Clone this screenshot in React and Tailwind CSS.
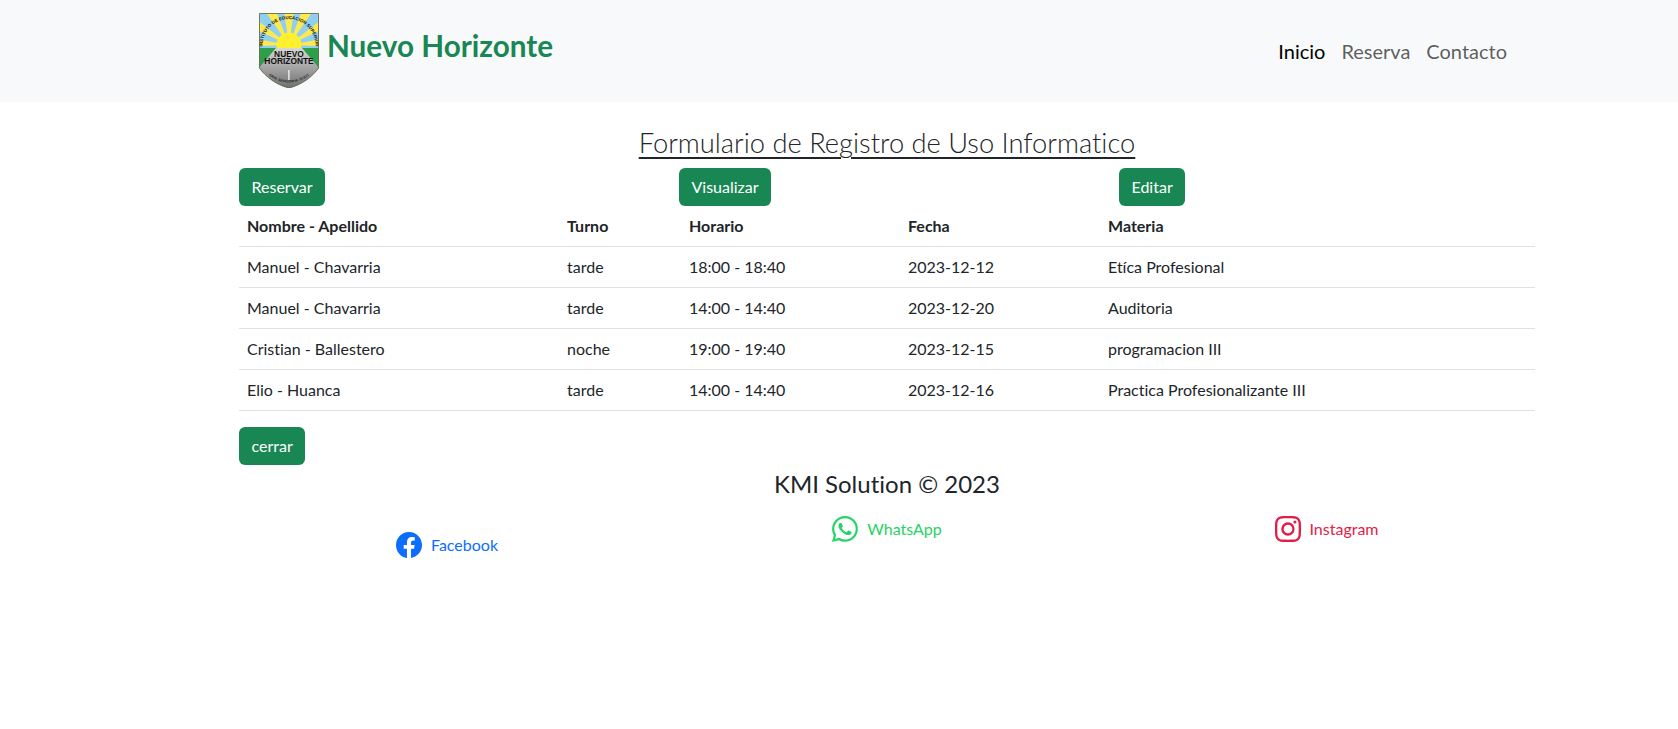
import React from 'react';
import { BsFacebook, BsWhatsapp, BsInstagram } from 'react-icons/bs';

const rows = [
  { nombre: 'Manuel - Chavarria', turno: 'tarde', horario: '18:00 - 18:40', fecha: '2023-12-12', materia: 'Etíca Profesional' },
  { nombre: 'Manuel - Chavarria', turno: 'tarde', horario: '14:00 - 14:40', fecha: '2023-12-20', materia: 'Auditoria' },
  { nombre: 'Cristian - Ballestero', turno: 'noche', horario: '19:00 - 19:40', fecha: '2023-12-15', materia: 'programacion III' },
  { nombre: 'Elio - Huanca', turno: 'tarde', horario: '14:00 - 14:40', fecha: '2023-12-16', materia: 'Practica Profesionalizante III' },
];

const rays = [
  'M30 32 L-2 26 L-2 33 Z',
  'M30 32 L-2 7 L-2 17 Z',
  'M30 32 L6 -2 L17 -2 Z',
  'M30 32 L25 -2 L35 -2 Z',
  'M30 32 L43 -2 L54 -2 Z',
  'M30 32 L62 7 L62 17 Z',
  'M30 32 L62 26 L62 33 Z',
];

const shieldPath = 'M0.5 0.5 H59.5 V55 C59.5 55 50 70 30 75 C10 70 0.5 55 0.5 55 Z';

// escudo del instituto, dibujado a mano
const Logo = () => (
  <svg viewBox="0 0 60 75" className="w-[60px] h-[75px] shrink-0">
    <defs>
      <clipPath id="shield">
        <path d={shieldPath} />
      </clipPath>
      <linearGradient id="road" x1="0" y1="0" x2="0" y2="1">
        <stop offset="0" stopColor="#d8d8d8" />
        <stop offset="1" stopColor="#6f6f6f" />
      </linearGradient>
      <path id="arcTop" d="M3.5 33 A26.5 27 0 0 1 56.5 33" />
      <path id="arcBottom" d="M9 62 Q30 77 51 62" />
    </defs>
    <g clipPath="url(#shield)">
      <rect width="60" height="36" fill="#8fd0f0" />
      {rays.map((d, i) => (
        <path key={i} d={d} fill="#ffe94d" />
      ))}
      <circle cx="30" cy="32" r="12.5" fill="#fff02e" />
      <rect y="35" width="60" height="24" fill="#2f9e4a" />
      <path d="M17 35 H43 L60 55 V75 H0 V55 Z" fill="url(#road)" />
      <rect x="29.3" y="57" width="1.2" height="10" fill="#fff" />
    </g>
    <text fontSize="4.5" fontWeight="700" fill="#111" fontFamily="'Liberation Sans', sans-serif">
      <textPath href="#arcTop" startOffset="50%" textAnchor="middle">INSTITUTO DE EDUCACION SUPERIOR</textPath>
    </text>
    <text x="30" y="43.5" textAnchor="middle" fontSize="8.4" fontWeight="700" fill="#111" fontFamily="'Liberation Sans', sans-serif">NUEVO</text>
    <text x="30" y="51" textAnchor="middle" fontSize="8.4" fontWeight="700" fill="#111" fontFamily="'Liberation Sans', sans-serif">HORIZONTE</text>
    <text fontSize="3.4" fontWeight="700" fill="#222" fontFamily="'Liberation Sans', sans-serif">
      <textPath href="#arcBottom" startOffset="50%" textAnchor="middle">GRAL SAVADOR M. JUJUY</textPath>
    </text>
    <path d={shieldPath} fill="none" stroke="#5c5c3c" strokeWidth="0.8" />
  </svg>
);

const Btn = ({ children }) => (
  <button className="h-[38px] px-[12.5px] rounded-md bg-[#198754] text-white text-[16px]">{children}</button>
);

export default function App() {
  return (
    <div className="min-h-[729px] bg-white text-[#212529] font-['Lato',sans-serif] [font-variant-ligatures:none]">
      <header className="h-[102px] bg-[#f8f9fa] pl-[259px] pr-[171px] flex justify-between">
        <div className="flex items-start pt-[13px]">
          <Logo />
          <span className="ml-[8px] mt-[15px] text-[29.7px] leading-[36px] font-bold text-[#198754]">Nuevo Horizonte</span>
        </div>
        <nav className="flex gap-4 pt-[36px] text-[20px] leading-[30px] text-black/65">
          <a className="text-black">Inicio</a>
          <a>Reserva</a>
          <a>Contacto</a>
        </nav>
      </header>

      <main className="ml-[239px] w-[1296px]">
        <h1 className="pt-[23px] h-[66px] text-center text-[27.3px] leading-[36px] font-light underline decoration-2 underline-offset-4">
          Formulario de Registro de Uso Informatico
        </h1>
        <div className="grid grid-cols-[440px_440px_1fr] items-start">
          <div><Btn>Reservar</Btn></div>
          <div><Btn>Visualizar</Btn></div>
          <div><Btn>Editar</Btn></div>
        </div>
        <table className="w-full table-fixed text-[16px] leading-[24px]">
          <colgroup>
            <col className="w-[320px]" />
            <col className="w-[122px]" />
            <col className="w-[219px]" />
            <col className="w-[200px]" />
            <col />
          </colgroup>
          <thead>
            <tr className="border-b border-[#dee2e6]">
              <th className="p-2 text-left font-bold">Nombre - Apellido</th>
              <th className="p-2 text-left font-bold">Turno</th>
              <th className="p-2 text-left font-bold">Horario</th>
              <th className="p-2 text-left font-bold">Fecha</th>
              <th className="p-2 text-left font-bold">Materia</th>
            </tr>
          </thead>
          <tbody>
            {rows.map((r, i) => (
              <tr key={i} className="border-b border-[#dee2e6]">
                <td className="p-2">{r.nombre}</td>
                <td className="p-2">{r.turno}</td>
                <td className="p-2">{r.horario}</td>
                <td className="p-2">{r.fecha}</td>
                <td className="p-2">{r.materia}</td>
              </tr>
            ))}
          </tbody>
        </table>
        <div className="mt-4"><Btn>cerrar</Btn></div>
        <p className="mt-[1px] text-center text-[24px] leading-[36px]">KMI Solution © 2023</p>
      </main>

      <footer className="ml-[227px] w-[1320px] grid grid-cols-3 mt-[14px] items-start">
        <a className="mt-[16px] flex items-center justify-center gap-[9px] text-[#0d6efd]">
          <BsFacebook size={26} /><span>Facebook</span>
        </a>
        <a className="flex items-center justify-center gap-[9px] text-[#25d366]">
          <BsWhatsapp size={26} /><span>WhatsApp</span>
        </a>
        <a className="flex items-center justify-center gap-[8px] text-[#e11d48]">
          <BsInstagram size={26} /><span>Instagram</span>
        </a>
      </footer>
    </div>
  );
}
